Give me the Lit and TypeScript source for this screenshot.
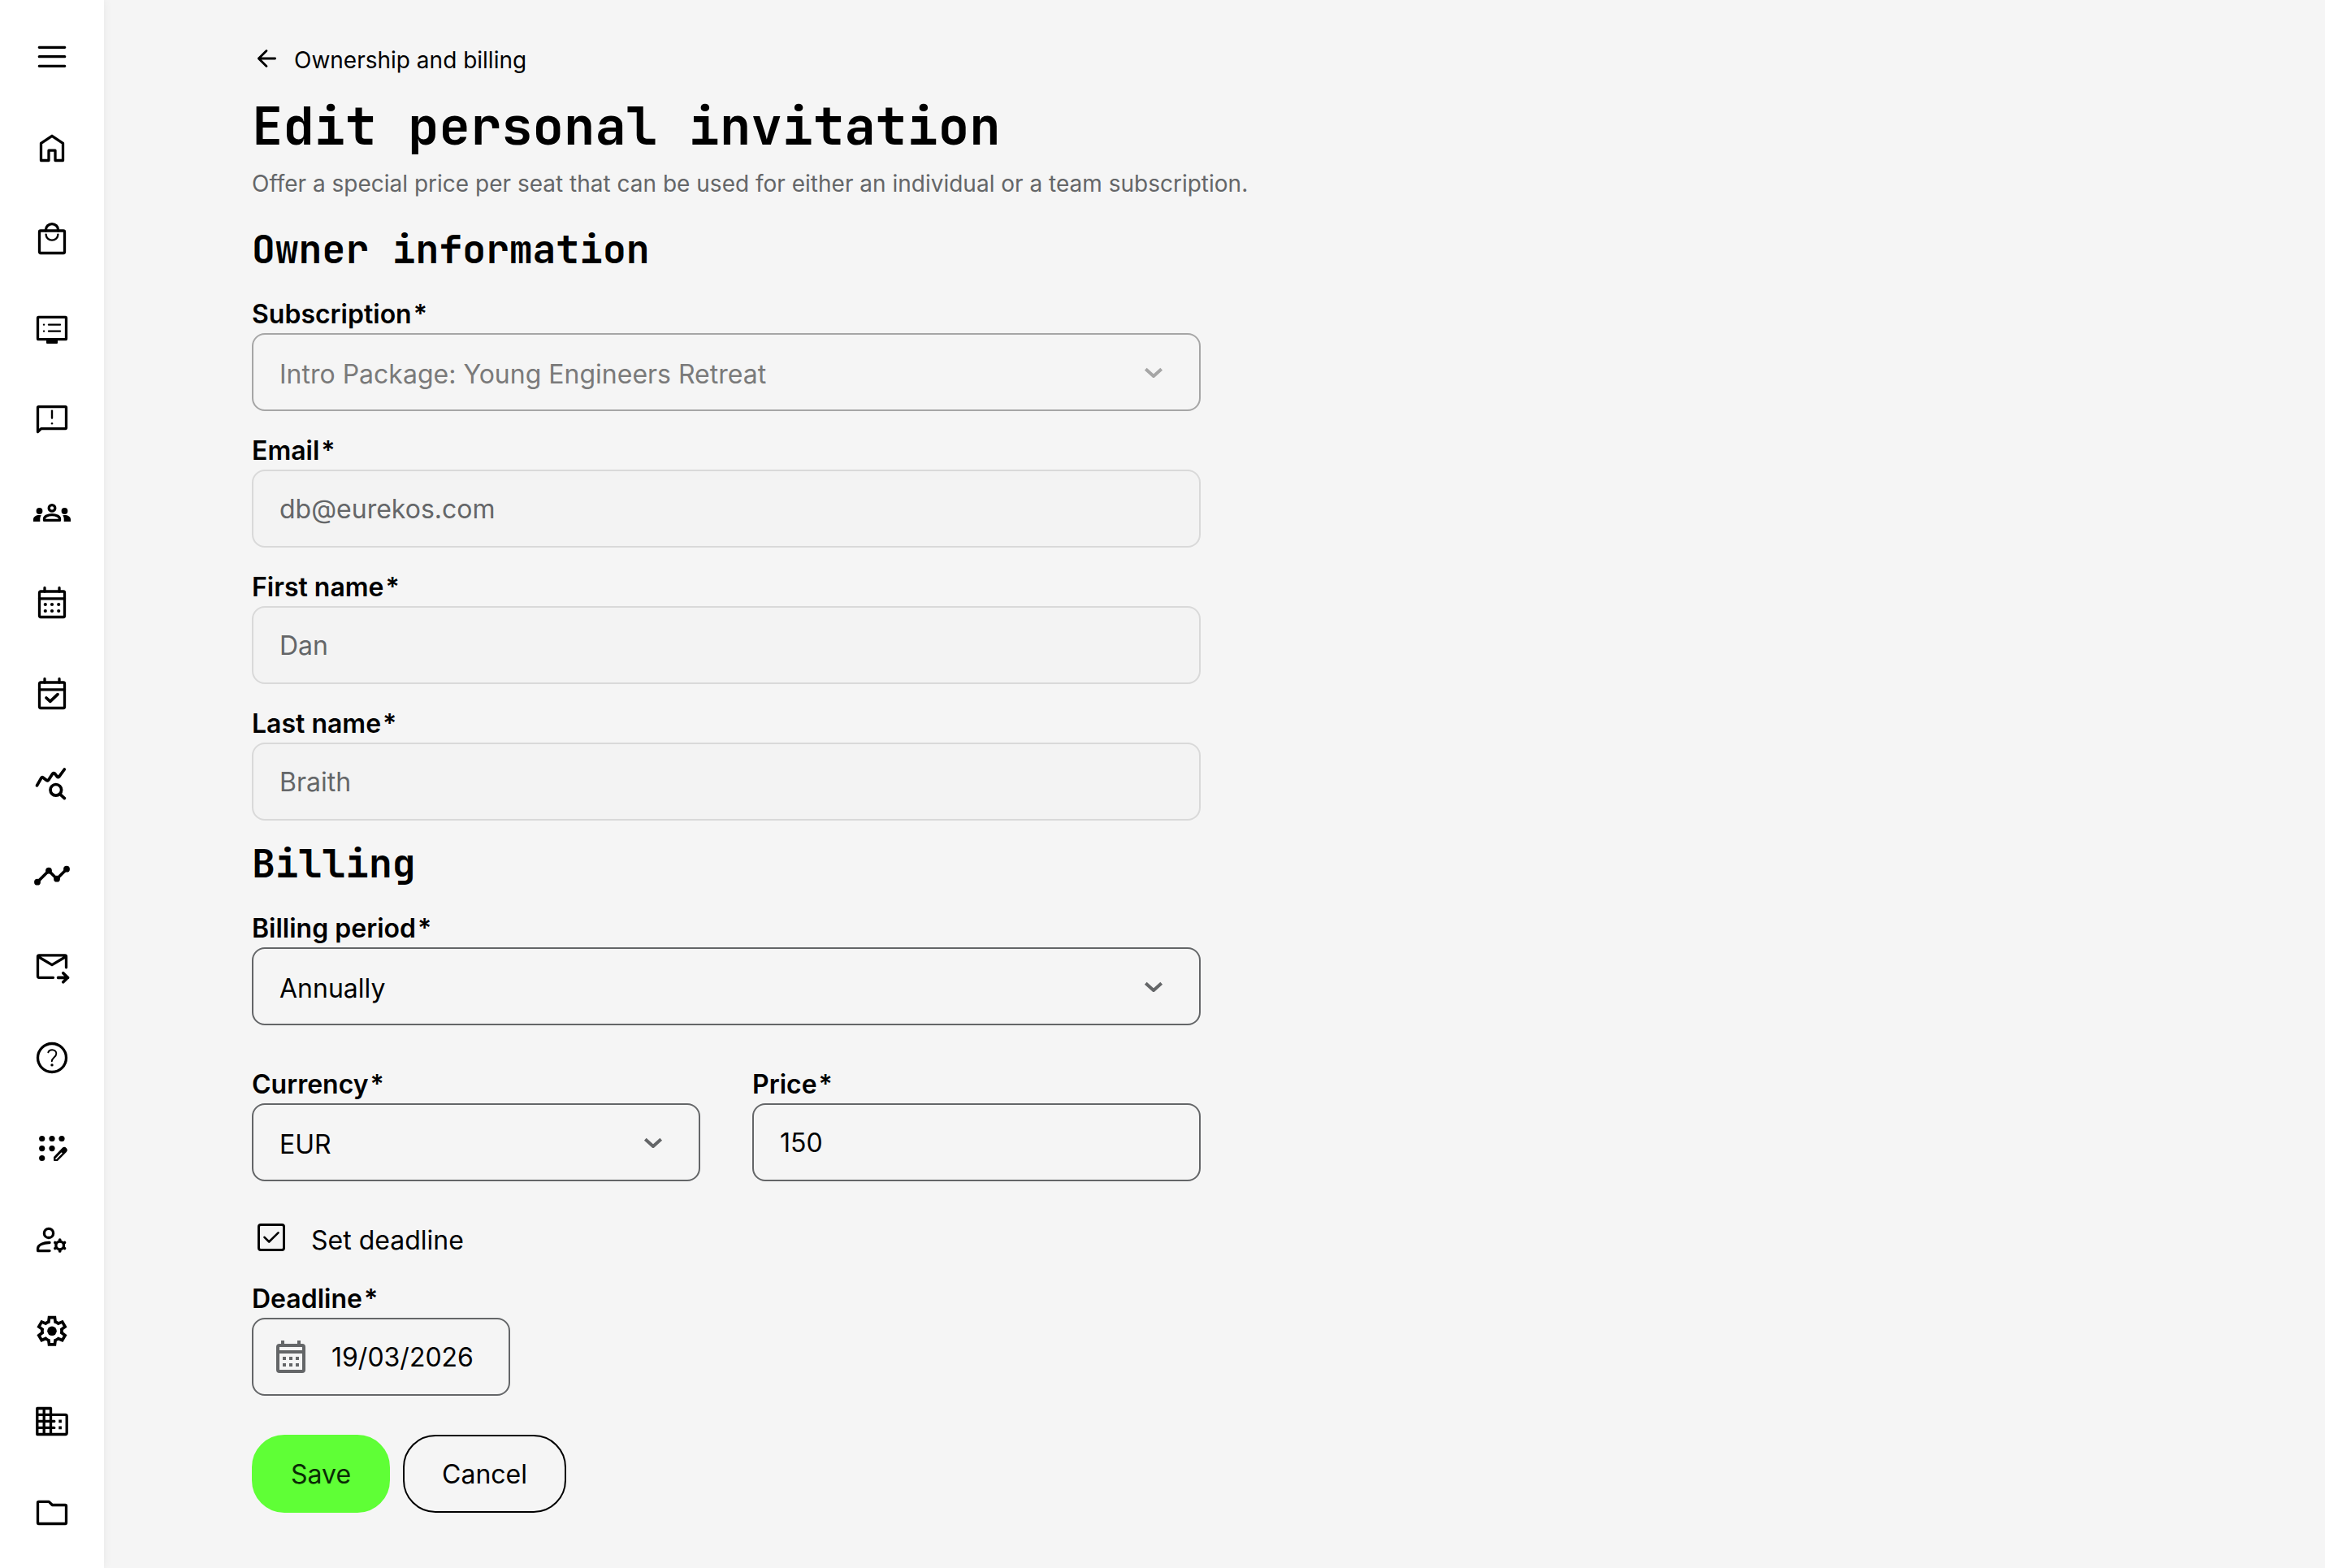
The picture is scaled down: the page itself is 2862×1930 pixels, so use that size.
import { LitElement, html, svg, css, nothing, type SVGTemplateResult } from "lit";
import { customElement, state } from "lit/decorators.js";

interface NavItem {
  label: string;
  icon: SVGTemplateResult;
}

const calendarFrame = svg`
  <rect x="7.5" y="9" width="31" height="31.5" rx="1.5" />
  <path d="M14 9V4.5M32 9V4.5M7.5 17.8h31" />`;

const NAV: NavItem[] = [
  { label: "Menu", icon: svg`<path d="M7.3 11.3h31.4M7.3 22.7h31.4M7.3 34.3h31.4" />` },
  { label: "Home", icon: svg`<path d="M9.5 17.4 23 8.3l13.5 9.1v21.1H27V26.2h-8v12.3H9.5Z" />` },
  {
    label: "Shop",
    icon: svg`<rect x="7.5" y="13" width="31" height="27.5" rx="1.5" />
      <path d="M15.4 13v-1a7.6 7.4 0 0 1 15.2 0v1" />
      <path class="thin" d="M15.6 17.6a7.4 7 0 0 0 14.8 0" />`,
  },
  {
    label: "Courses",
    icon: svg`<rect x="5.5" y="7.3" width="35" height="27.4" rx="1" />
      <path class="solid" d="M16 35h14v4q0 1-1 1H17q-1 0-1-1Z" />
      <path class="thin" d="M13 16.6h.1M19 16.6h14M13 24.6h.1M19 24.6h14" />`,
  },
  {
    label: "Announcements",
    icon: svg`<path d="M5.5 36.6V6.6q0-1 1-1h33q1 0 1 1v25q0 1-1 1H9.6Z" />
      <path class="thin" d="M23 10.6v9" /><circle class="solid" cx="23" cy="26.2" r="1.2" />`,
  },
  {
    label: "Groups",
    icon: svg`<circle cx="23" cy="18.4" r="3.8" />
      <circle class="solid" cx="7.5" cy="22" r="3.9" /><circle class="solid" cx="38.5" cy="22" r="3.9" />
      <path d="M13.5 33.4v-1.8c0-3 4.5-5 9.5-5s9.5 2 9.5 5v1.8Z" />
      <path class="solid" d="M0 35v-2.5c0-3.4 3.4-5.4 7.5-5.4l2.3.2c-1 1.4-1.500 3-1.500 4.700v3ZM46 35v-2.500c0-3.400-3.400-5.400-7.500-5.400l-2.300.2c1 1.400 1.500 3 1.500 4.700v3Z" />`,
  },
  {
    label: "Calendar",
    icon: svg`${calendarFrame}
      <g class="solid"><circle cx="14.8" cy="25" r="2.1" /><circle cx="23" cy="25" r="2.1" /><circle cx="31.2" cy="25" r="2.1" />
      <circle cx="14.8" cy="33" r="2.1" /><circle cx="23" cy="33" r="2.1" /><circle cx="31.2" cy="33" r="2.1" /></g>`,
  },
  { label: "Bookings", icon: svg`${calendarFrame}<path class="bold" d="m16 28 4.800 4.400 9.200-8.800" />` },
  {
    label: "Reports",
    icon: svg`<path class="bold" d="M4.5 23.8 9.800 14.600q1-1.400 2.400-.4l4.200 3.300q1.400 1 2.400-.5l5-7.700q1-1.400 2.500-.3l3.200 4.100q1.200 1.200 2.300-.3L38.300 4" />
      <circle class="bold" cx="27.8" cy="29.3" r="6.8" /><path class="bold" d="m33 34.600 5.400 5" />`,
  },
  {
    label: "Timeline",
    icon: svg`<path class="bold" d="M5 30.7 19 16.7l10 10 12-12" />
      <g class="solid"><circle cx="5" cy="30.7" r="3.9" /><circle cx="19" cy="16.7" r="3.9" /><circle cx="29" cy="26.7" r="3.9" /><circle cx="41" cy="14.7" r="3.9" /></g>`,
  },
  {
    label: "Invitations",
    icon: svg`<path d="M24.5 36.3H7q-1.500 0-1.500-1.500V10.300q0-1.500 1.500-1.500h32q1.500 0 1.500 1.500v13.500M6 10.500l17 10.200 17-10.200" />
      <path class="bold" d="M30.6 36.3h12M36.800 30.800l5.600 5.500-5.600 5.500" />`,
  },
  {
    label: "Help",
    icon: svg`<circle cx="23" cy="23" r="17.5" />
      <path class="fine" d="M18.300 16.300c.8-2.100 2.600-3.100 4.800-3.100 3 0 5.200 1.900 5.200 4.700 0 4.300-5.500 4.800-5.500 9.300" />
      <circle class="solid" cx="23" cy="31.9" r="1.7" />`,
  },
  {
    label: "App registration",
    icon: svg`<g class="solid"><circle cx="10.7" cy="10.5" r="3.6" /><circle cx="23" cy="10.5" r="3.6" /><circle cx="35" cy="10.5" r="3.6" />
      <circle cx="10.7" cy="22.6" r="3.6" /><circle cx="23" cy="22.6" r="3.6" /><circle cx="10.7" cy="34.5" r="3.6" />
      <path d="M25 37v-3.200q0-.7.6-1.300L35.600 22q2.600-2.300 5 0 2.400 2.500.2 5L30.400 37.400q-.6.6-1.400.6h-3q-1 0-1-1Z" /></g>
      <path class="gap" d="m28 35.200 6.800-6.800" />`,
  },
  {
    label: "Manage accounts",
    icon: svg`<circle cx="19" cy="14.9" r="5.600" />
      <path d="M20 26.500c-6.500-.2-14.400 2.200-14.400 7.300v2.800H20" />
      <circle cx="32.700" cy="30" r="4.800" />
      <path class="bold" d="M32.700 24v-.9M32.700 36.900v-.9M37.700 27l.8-.5M26.900 33.500l.8-.5M37.700 33l.8.5M26.900 26.500l.8.5" />`,
  },
  {
    label: "Settings",
    icon: svg`<path class="solid" transform="translate(.8 45.5) scale(.0462)" d="m370-80-16-128q-13-5-24.500-12T307-235l-119 50L78-375l103-78q-1-7-1-13.500v-27q0-6.500 1-13.500L78-585l110-190 119 50q11-8 23-15t24-12l16-128h220l16 128q13 5 24.500 12t22.500 15l119-50 110 190-103 78q1 7 1 13.500v27q0 6.500-2 13.500l103 78-110 190-118-50q-11 8-23 15t-24 12L590-80H370Zm70-80h79l14-106q31-8 57.500-23.500T639-327l99 41 39-68-86-65q5-14 7-29.500t2-31.500q0-16-2-31.500t-7-29.500l86-65-39-68-99 42q-22-23-48.500-38.500T533-694l-13-106h-79l-14 106q-31 8-57.500 23.500T321-633l-99-41-39 68 86 64q-5 15-7 30t-2 32q0 16 2 31t7 30l-86 65 39 68 99-42q22 23 48.500 38.500T427-266l13 106Z" />
      <circle class="solid" cx="23" cy="23.3" r="5.8" />`,
  },
  {
    label: "Organisation",
    icon: svg`<path d="M4.800 6.500h16.700v32H4.800ZM13.200 6.500v32M4.800 14.400h34.700q1.700 0 1.700 1.700v20.700q0 1.700-1.700 1.700H21.500M4.800 22.400h21M4.800 30.400h21" />
      <path class="solid" d="M31.300 20.600h3.600v3.600h-3.600ZM31.300 28.600h3.600v3.600h-3.600Z" />`,
  },
  { label: "Files", icon: svg`<path d="M5.500 10.500q0-1.200 1.200-1.200h12.500l4.200 4.200h15.900q1.200 0 1.200 1.200v20.600q0 1.200-1.200 1.200H6.700q-1.200 0-1.200-1.200Z" />` },
];

interface FieldOptions {
  id: string;
  label: string;
  value: string;
  disabled?: boolean;
  type?: string;
}

@customElement("app-root")
export class AppRoot extends LitElement {
  @state() private hasDeadline = true;

  static styles = css`
    :host {
      display: block;
      min-height: 100vh;
      background: #f5f5f5;
      color: #000;
      font-family: Inter, "Liberation Sans", sans-serif;
      font-size: 32px;
      line-height: 40px;
    }
    * {
      box-sizing: border-box;
    }
    .shell {
      display: flex;
      min-height: 100vh;
    }
    .rail {
      flex: none;
      width: 128px;
      padding-top: 14px;
      background: #fff;
      box-shadow: 0 0 12px rgba(0, 0, 0, 0.06);
    }
    .rail-list {
      display: flex;
      flex-direction: column;
      margin: 0;
      padding: 0;
      list-style: none;
    }
    .rail-button {
      display: flex;
      align-items: center;
      justify-content: center;
      width: 100%;
      height: 112px;
      padding: 0;
      border: 0;
      background: none;
      color: inherit;
      cursor: pointer;
    }
    .icon {
      flex: none;
      width: 46px;
      height: 46px;
      fill: none;
      stroke: currentColor;
      stroke-width: 3.3;
      stroke-linecap: round;
      stroke-linejoin: round;
    }
    .icon .thin {
      stroke-width: 2.4;
    }
    .icon .fine {
      stroke-width: 1.9;
    }
    .icon .bold {
      stroke-width: 3.7;
    }
    .icon .solid {
      fill: currentColor;
      stroke: none;
    }
    .icon .gap {
      stroke: #fff;
      stroke-width: 1.6;
    }
    .page {
      flex: 1;
      min-width: 0;
      padding: 54px 48px 48px 182px;
    }
    .back {
      display: inline-flex;
      align-items: center;
      gap: 16px;
      color: inherit;
      font-size: 28px;
      text-decoration: none;
      vertical-align: top;
    }
    .back-icon {
      width: 36px;
      height: 36px;
      fill: none;
      stroke: currentColor;
      stroke-width: 2.8;
      stroke-linecap: round;
      stroke-linejoin: round;
    }
    .title,
    .section-title {
      margin: 0;
      font-family: "JetBrains Mono", "DejaVu Sans Mono", monospace;
      font-weight: 700;
    }
    .title {
      margin-top: 21px;
      font-size: 64px;
      line-height: 80px;
    }
    .lead {
      margin: 11px 0 29px;
      color: #646668;
      font-size: 28px;
    }
    .section-title {
      margin-bottom: 28px;
      font-size: 48px;
      line-height: 64px;
    }
    .form {
      display: flex;
      flex-direction: column;
      max-width: 1168px;
    }
    .fields {
      display: flex;
      flex-direction: column;
      gap: 29px;
      margin-bottom: 21px;
    }
    .field {
      display: flex;
      flex-direction: column;
      gap: 3px;
      min-width: 0;
    }
    .label {
      font-weight: 600;
    }
    .mark {
      margin-left: 2px;
    }
    .control {
      display: grid;
      align-items: center;
    }
    .control > * {
      grid-area: 1 / 1;
    }
    .input {
      width: 100%;
      min-width: 0;
      height: 96px;
      margin: 0;
      padding: 0 32px;
      border: 2px solid #646668;
      border-radius: 16px;
      background: none;
      color: #000;
      font: inherit;
      opacity: 1;
      appearance: none;
    }
    .select {
      padding: 6px 88px 0 32px;
    }
    .input:disabled {
      border-color: #d9d9d9;
      background: #f3f3f3;
      color: #646668;
    }
    .select:disabled {
      border-color: #a6a6a6;
      background: none;
      color: #7a7a7a;
    }
    .chevron {
      justify-self: end;
      width: 48px;
      height: 48px;
      margin-right: 34px;
      fill: none;
      stroke: #646668;
      stroke-width: 4;
      pointer-events: none;
    }
    .chevron.muted {
      stroke: #a6a6a6;
    }
    .row {
      display: grid;
      grid-template-columns: 1fr 1fr;
      gap: 64px;
      margin: 53px 0 52px;
    }
    .billing {
      margin-bottom: 0;
    }
    .check {
      display: flex;
      align-items: center;
      gap: 32px;
      margin-bottom: 31px;
      padding-left: 7px;
      line-height: 42px;
    }
    .check-box {
      display: grid;
      flex: none;
      align-self: flex-start;
      width: 34px;
      height: 34px;
    }
    .check-box > * {
      grid-area: 1 / 1;
    }
    .check-input {
      width: 34px;
      height: 34px;
      margin: 0;
      border: 3px solid #000;
      border-radius: 4px;
      appearance: none;
    }
    .check-mark {
      width: 34px;
      height: 34px;
      fill: none;
      stroke: #000;
      stroke-width: 2.6;
      stroke-linecap: round;
      stroke-linejoin: round;
      pointer-events: none;
    }
    .deadline {
      width: 318px;
    }
    .date {
      padding: 0 24px 0 96px;
    }
    .date-icon {
      width: 48px;
      height: 48px;
      margin-left: 24px;
      fill: #646668;
      pointer-events: none;
    }
    .actions {
      display: flex;
      gap: 16px;
      margin-top: 48px;
    }
    .button {
      height: 96px;
      padding: 2px 46px 0;
      border: 2px solid #000;
      border-radius: 40px;
      background: none;
      color: #000;
      font: inherit;
      cursor: pointer;
    }
    .primary {
      border-color: #5fff36;
      background: #5fff36;
      color: #0a2b05;
    }
  `;

  private label(id: string, text: string) {
    return html`<label class="label" for=${id}>${text}<span class="mark">*</span></label>`;
  }

  private textField({ id, label, value, disabled = false, type = "text" }: FieldOptions) {
    return html`<div class="field">
      ${this.label(id, label)}
      <input class="input" id=${id} type=${type} .value=${value} ?disabled=${disabled} required />
    </div>`;
  }

  private selectField({ id, label, value, disabled = false }: FieldOptions) {
    return html`<div class="field">
      ${this.label(id, label)}
      <div class="control">
        <select class="input select" id=${id} ?disabled=${disabled} required>
          <option selected>${value}</option>
        </select>
        <svg class="chevron ${disabled ? "muted" : ""}" viewBox="0 0 48 48" aria-hidden="true">
          <path d="M14.300 20.200 24 29l9.700-8.800" stroke-linejoin="round" />
        </svg>
      </div>
    </div>`;
  }

  private toggleDeadline(event: Event) {
    this.hasDeadline = (event.target as HTMLInputElement).checked;
  }

  render() {
    return html`<div class="shell">
      <nav class="rail" aria-label="Main">
        <ul class="rail-list">
          ${NAV.map(
            (item) => html`<li>
              <button class="rail-button" type="button" aria-label=${item.label}>
                <svg class="icon" viewBox="0 0 46 46" aria-hidden="true">${item.icon}</svg>
              </button>
            </li>`,
          )}
        </ul>
      </nav>
      <main class="page">
        <a class="back" href="#billing">
          <svg class="back-icon" viewBox="0 0 36 36" aria-hidden="true">
            <path d="M28.600 16H8.400M18 6.400 8.400 16l9.600 9.600" />
          </svg>
          Ownership and billing
        </a>
        <h1 class="title">Edit personal invitation</h1>
        <p class="lead">Offer a special price per seat that can be used for either an individual or a team subscription.</p>
        <form class="form">
          <h2 class="section-title">Owner information</h2>
          <div class="fields">
            ${this.selectField({ id: "subscription", label: "Subscription", value: "Intro Package: Young Engineers Retreat", disabled: true })}
            ${this.textField({ id: "email", label: "Email", value: "db@eurekos.com", disabled: true, type: "email" })}
            ${this.textField({ id: "first-name", label: "First name", value: "Dan", disabled: true })}
            ${this.textField({ id: "last-name", label: "Last name", value: "Braith", disabled: true })}
          </div>
          <h2 class="section-title" id="billing">Billing</h2>
          <div class="fields billing">
            ${this.selectField({ id: "period", label: "Billing period", value: "Annually" })}
          </div>
          <div class="row">
            ${this.selectField({ id: "currency", label: "Currency", value: "EUR" })}
            ${this.textField({ id: "price", label: "Price", value: "150" })}
          </div>
          <label class="check">
            <span class="check-box">
              <input class="check-input" type="checkbox" .checked=${this.hasDeadline} @change=${this.toggleDeadline} />
              ${this.hasDeadline
                ? html`<svg class="check-mark" viewBox="0 0 34 34" aria-hidden="true"><path d="m8.500 16.800 5.700 5.700L25.500 11.300" /></svg>`
                : nothing}
            </span>
            Set deadline
          </label>
          ${this.hasDeadline
            ? html`<div class="field deadline">
                ${this.label("deadline", "Deadline")}
                <div class="control">
                  <input class="input date" id="deadline" type="text" .value=${"19/03/2026"} required />
                  <svg class="date-icon" viewBox="0 0 24 24" aria-hidden="true">
                    <path fill-rule="evenodd" d="M6 2h2v2h8V2h2v2h1a2 2 0 0 1 2 2v14a2 2 0 0 1-2 2H5a2 2 0 0 1-2-2V6a2 2 0 0 1 2-2h1ZM5 6v2h14V6ZM5 10v10h14V10Z" />
                    <path d="M7 12h2v2H7ZM11 12h2v2h-2ZM15 12h2v2h-2ZM7 16h2v2H7ZM11 16h2v2h-2ZM15 16h2v2h-2Z" />
                  </svg>
                </div>
              </div>`
            : nothing}
          <div class="actions">
            <button class="button primary" type="button">Save</button>
            <button class="button" type="button">Cancel</button>
          </div>
        </form>
      </main>
    </div>`;
  }
}
